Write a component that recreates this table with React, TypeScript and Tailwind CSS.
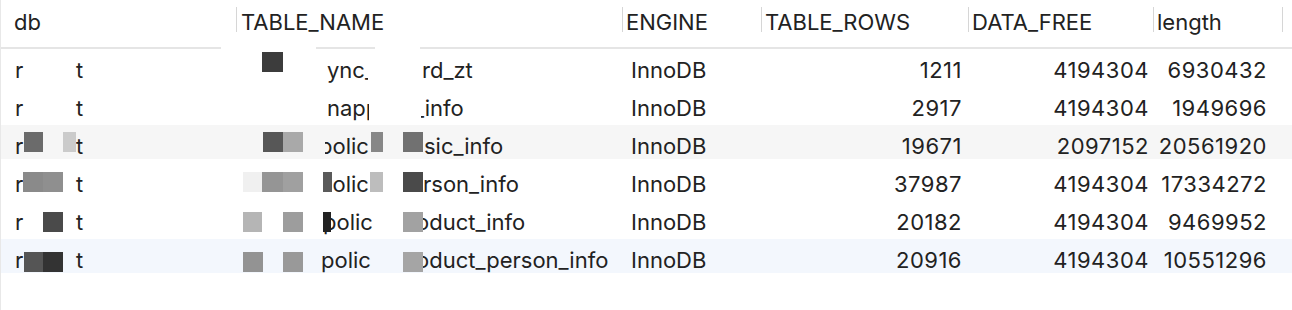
import type { ReactNode } from "react";

type RowProps = {
  bg?: string;
  left: ReactNode;
  right: ReactNode;
  leftPad?: string;
  rows: string;
  free: string;
  len: string;
  blocks: string[];
};

function Row({ bg = "", left, right, leftPad = "pl-[90px]", rows, free, len, blocks }: RowProps) {
  return (
    <div className="relative h-[38px]">
      <div className={`flex h-[34px] items-start pt-[8px] ${bg}`}>
        <div className="flex w-[236px] shrink-0">
          <span className="w-[75px] pl-[14px]">r</span>
          <span>t</span>
        </div>
        <div className="flex w-[386px] shrink-0">
          <span className={`w-[184px] ${leftPad}`}>{left}</span>
          <span>{right}</span>
        </div>
        <div className="w-[139px] shrink-0 pl-[8px]">InnoDB</div>
        <div className="w-[207px] shrink-0 pr-[7px] text-right tracking-[0.5px]">{rows}</div>
        <div className="w-[185px] shrink-0 pr-[5px] text-right tracking-[0.5px]">{free}</div>
        <div className="w-[129px] shrink-0 pr-[16px] text-right tracking-[0.5px]">{len}</div>
      </div>
      {blocks.map((b, i) => (
        <span key={i} className={`absolute h-[20px] ${b}`} />
      ))}
    </div>
  );
}

function Head({ label, w, pad = "pl-[5px]", sep = true }: { label: string; w: string; pad?: string; sep?: boolean }) {
  return (
    <div className={`flex shrink-0 ${w}`}>
      {sep && <span className="mt-[7px] h-[25px] w-px bg-[#d6d6d6]" />}
      <span className={`pt-[9px] ${pad}`}>{label}</span>
    </div>
  );
}

export default function App() {
  return (
    <div className="h-[310px] w-[1292px] overflow-hidden border-l border-[#e8e8e8] bg-white font-['Inter',sans-serif] text-[22px] leading-[26px] text-[#222]">
      <div className="relative flex h-[49px] border-b-2 border-[#e5e5e5]">
        <Head label="db" w="w-[235px]" pad="pl-[13px]" sep={false} />
        <Head label="TABLE_NAME" w="w-[386px]" pad="pl-[4px]" />
        <Head label="ENGINE" w="w-[139px]" pad="pl-[3px]" />
        <Head label="TABLE_ROWS" w="w-[207px]" pad="pl-[3px]" />
        <Head label="DATA_FREE" w="w-[185px]" pad="pl-[3px]" />
        <Head label="length" w="w-[129px]" pad="pl-[3px]" />
        <span className="mt-[7px] h-[25px] w-px bg-[#d6d6d6]" />
        <span className="absolute left-[220px] top-[44px] h-[8px] w-[95px] bg-white" />
        <span className="absolute left-[374px] top-[44px] h-[8px] w-[45px] bg-white" />
      </div>

      <Row
        left={<span className="inline-block w-[41px] overflow-hidden whitespace-nowrap">ync_</span>}
        right={<span className="pl-[1px]">rd_zt</span>}
        rows="1211"
        free="4194304"
        len="6930432"
        blocks={["left-[261px] top-[3px] w-[21px] bg-[#3c3c3c]"]}
      />
      <Row
        leftPad="pl-[90px]"
        left={<span className="inline-block w-[42px] overflow-hidden whitespace-nowrap">napp</span>}
        right={
          <span className="inline-flex overflow-hidden">
            <span className="-ml-[7px]">_info</span>
          </span>
        }
        rows="2917"
        free="4194304"
        len="1949696"
        blocks={[]}
      />
      <Row
        bg="bg-[#f6f6f6]"
        leftPad="pl-[88px]"
        left={
          <span className="inline-flex w-[46px] overflow-hidden">
            <span className="-ml-[6px] whitespace-nowrap">polic</span>
          </span>
        }
        right={<span className="pl-[3px]">sic_info</span>}
        rows="19671"
        free="2097152"
        len="20561920"
        blocks={[
          "left-[23px] top-[7px] w-[19px] bg-[#6b6b6b]",
          "left-[62px] top-[7px] w-[13px] bg-[#cbcbcb]",
          "left-[262px] top-[7px] w-[20px] bg-[#575757]",
          "left-[282px] top-[7px] w-[20px] bg-[#a9a9a9]",
          "left-[370px] top-[7px] w-[12px] bg-[#878787]",
          "left-[402px] top-[7px] w-[20px] bg-[#717171]",
        ]}
      />
      <Row
        leftPad="pl-[88px]"
        left={
          <span className="inline-flex w-[46px] overflow-hidden">
            <span className="-ml-[6px] whitespace-nowrap">polic</span>
          </span>
        }
        right={<span className="pl-[2px]">rson_info</span>}
        rows="37987"
        free="4194304"
        len="17334272"
        blocks={[
          "left-[22px] top-[9px] w-[20px] bg-[#8a8a8a]",
          "left-[42px] top-[9px] w-[20px] bg-[#8f8f8f]",
          "left-[242px] top-[9px] w-[19px] bg-[#f0f0f0]",
          "left-[261px] top-[9px] w-[21px] bg-[#959595]",
          "left-[282px] top-[9px] w-[20px] bg-[#a0a0a0]",
          "left-[322px] top-[9px] w-[9px] bg-[#5a5a5a]",
          "left-[369px] top-[9px] w-[13px] bg-[#bdbdbd]",
          "left-[402px] top-[9px] w-[20px] bg-[#4a4a4a]",
        ]}
      />
      <Row
        leftPad="pl-[86px]"
        left={<span className="whitespace-nowrap">polic</span>}
        right={<span className="-ml-[5px]">oduct_info</span>}
        rows="20182"
        free="4194304"
        len="9469952"
        blocks={[
          "left-[42px] top-[11px] w-[20px] bg-[#4a4a4a]",
          "left-[242px] top-[11px] w-[19px] bg-[#b5b5b5]",
          "left-[282px] top-[11px] w-[20px] bg-[#9d9d9d]",
          "left-[322px] top-[11px] w-[8px] bg-[#222222]",
          "left-[402px] top-[11px] w-[20px] bg-[#a2a2a2]",
        ]}
      />
      <Row
        bg="bg-[#f3f7fd]"
        leftPad="pl-[84px]"
        left={<span className="whitespace-nowrap">polic</span>}
        right={<span className="-ml-[5px]">oduct_person_info</span>}
        rows="20916"
        free="4194304"
        len="10551296"
        blocks={[
          "left-[23px] top-[13px] w-[19px] bg-[#555555]",
          "left-[42px] top-[13px] w-[20px] bg-[#333333]",
          "left-[242px] top-[13px] w-[20px] bg-[#939393]",
          "left-[282px] top-[13px] w-[20px] bg-[#999999]",
          "left-[402px] top-[13px] w-[20px] bg-[#a5a5a5]",
        ]}
      />
    </div>
  );
}
